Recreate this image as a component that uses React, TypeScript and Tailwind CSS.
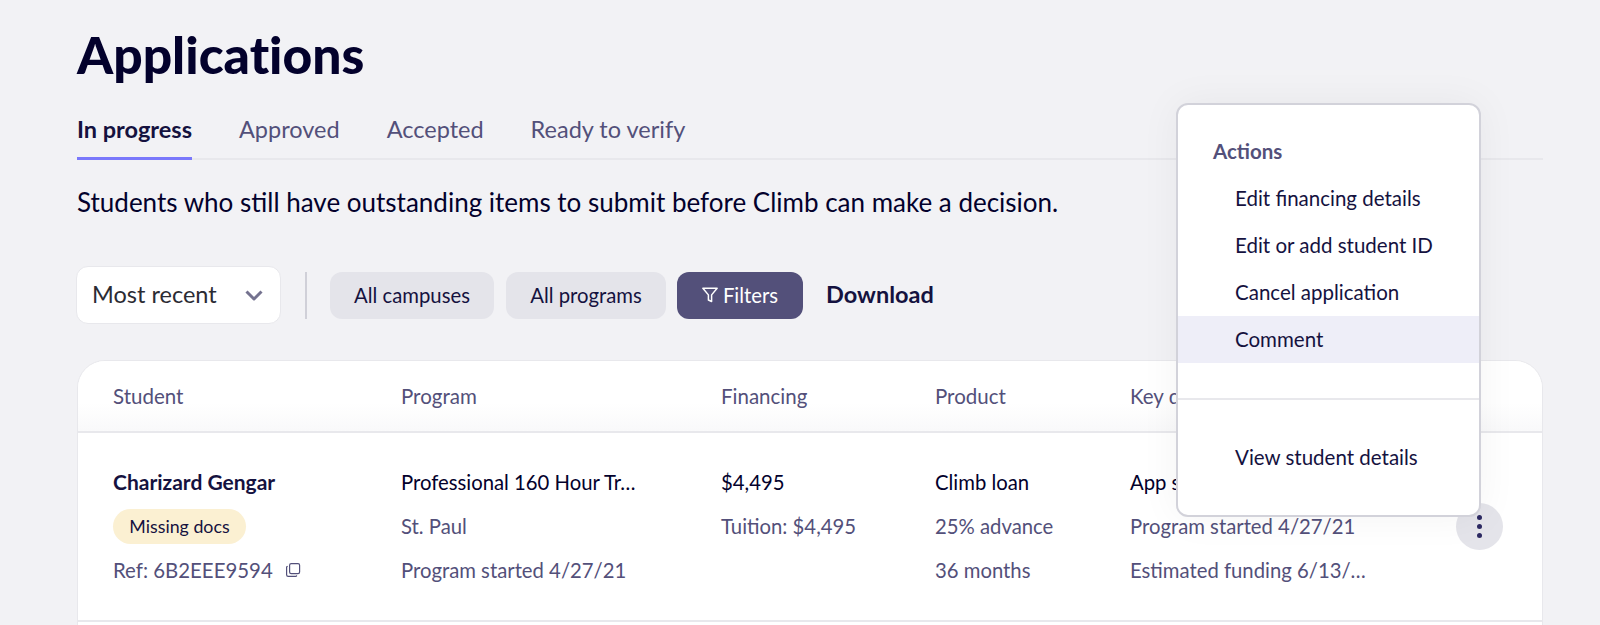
const tabs = ["Approved", "Accepted", "Ready to verify"];
const menuItems = ["Edit financing details", "Edit or add student ID", "Cancel application"];

function FilterIcon() {
  return (
    <svg width="16" height="16" viewBox="0 0 15 15" fill="none" stroke="currentColor" strokeWidth="1.4" strokeLinejoin="round">
      <path d="M.8 1.2h13.4L9 7.4v6.2l-3-1.4V7.4z" />
    </svg>
  );
}

function CopyIcon() {
  return (
    <svg width="16" height="16" viewBox="0 0 16 16" fill="none" stroke="#53507a" strokeWidth="1.2" strokeLinejoin="round">
      <rect x="4.6" y="1.6" width="10" height="10" rx="1.6" />
      <path d="M2.6 4.2 1.6 5v7.8c0 .9.7 1.6 1.6 1.6H11l.9-.9" />
    </svg>
  );
}

export default function App() {
  return (
    <div className="relative h-[625px] overflow-hidden bg-[#f2f2f5] pr-[57px] pl-[77px] font-['Lato','Noto_Sans',sans-serif] text-[#15123f]">
      <h1 className="pt-[23px] text-[51.6px] leading-[62px] font-black text-[#03012c] [font-variant-ligatures:none]">Applications</h1>

      {/* tabs */}
      <div className="mt-[21px] flex h-[54px] gap-[47px] border-b-2 border-[#e8e8ec] text-[23.5px] leading-[46px] text-[#53507a]">
        <span className="h-[54px] border-b-[3px] border-[#7a78fb] font-bold text-[#15123f]">In progress</span>
        {tabs.map((t) => (
          <span key={t}>{t}</span>
        ))}
      </div>

      <p className="mt-[26px] text-[26px] leading-[32px] text-[#03012c]">
        Students who still have outstanding items to submit before Climb can make a decision.
      </p>

      {/* filter bar */}
      <div className="mt-[49px] flex h-[56px] items-center">
        <div className="-ml-px flex h-[58px] w-[205px] shrink-0 items-center justify-between rounded-[12px] border border-[#e8e8ec] bg-white pr-[17px] pl-[15px] text-[23.5px] text-[#2b2b33]">
          Most recent
          <svg width="18" height="11" viewBox="0 0 18 11" fill="none" stroke="#74728f" strokeWidth="3" strokeLinejoin="round">
            <path d="M1.5 1.5 9 9l7.5-7.5" />
          </svg>
        </div>
        <div className="mr-[23px] ml-[24px] h-[47px] w-[2px] bg-[#d0d0d8]" />
        <div className="flex h-[47px] w-[164px] items-center justify-center rounded-[12px] bg-[#e4e4ea] text-[20.3px]">All campuses</div>
        <div className="ml-[12px] flex h-[47px] w-[160px] items-center justify-center rounded-[12px] bg-[#e4e4ea] text-[20.3px]">All programs</div>
        <div className="ml-[11px] flex h-[47px] w-[126px] items-center justify-center gap-[5px] rounded-[12px] bg-[#53507a] text-[20.3px] text-white">
          <FilterIcon />
          Filters
        </div>
        <span className="ml-[23px] text-[23.5px] font-bold">Download</span>
      </div>

      {/* table */}
      <div className="mt-[37px] h-[300px] rounded-t-[28px] border border-[#e8e8ec] bg-white">
        <div className="grid h-[72px] grid-cols-[288px_320px_214px_195px_1fr] items-center rounded-t-[28px] border-b-2 border-[#e8e8ec] bg-gradient-to-b from-white from-60% to-[#f9f9fa] pl-[35px] text-[20.5px] text-[#53507a]">
          <span>Student</span>
          <span>Program</span>
          <span>Financing</span>
          <span>Product</span>
          <span>Key dates</span>
        </div>
        <div className="relative grid h-[189px] grid-cols-[288px_320px_214px_195px_1fr] border-b-2 border-[#e8e8ec] pt-[27px] pl-[35px] text-[20.3px] leading-[44px] text-[#53507a]">
          <div>
            <div className="text-[21px] font-bold text-[#15123f]">Charizard Gengar</div>
            <div className="flex h-[44px] items-center">
              <span className="flex h-[35px] w-[133px] items-center justify-center rounded-full bg-[#fbf0d2] text-[17.8px] text-[#15123f]">Missing docs</span>
            </div>
            <div className="flex items-center gap-[12px] text-[20.4px]">
              Ref: 6B2EEE9594
              <CopyIcon />
            </div>
          </div>
          <div>
            <div className="text-[#03012c]">Professional 160 Hour Tr…</div>
            <div>St. Paul</div>
            <div>Program started 4/27/21</div>
          </div>
          <div>
            <div className="text-[#03012c]">$4,495</div>
            <div>Tuition: $4,495</div>
          </div>
          <div>
            <div className="text-[#03012c]">Climb loan</div>
            <div>25% advance</div>
            <div>36 months</div>
          </div>
          <div>
            <div className="text-[#03012c]">App submitted 4/27/21</div>
            <div>Program started 4/27/21</div>
            <div>Estimated funding 6/13/…</div>
          </div>
          {/* row menu button */}
          <div className="absolute top-[70px] right-[39px] flex h-[47px] w-[47px] flex-col items-center justify-center gap-[4px] rounded-full bg-[#e4e4ea]">
            <span className="h-[5px] w-[5px] rounded-full bg-[#2c2962]" />
            <span className="h-[5px] w-[5px] rounded-full bg-[#2c2962]" />
            <span className="h-[5px] w-[5px] rounded-full bg-[#2c2962]" />
          </div>
        </div>
      </div>

      {/* dropdown */}
      <div className="absolute top-[103px] left-[1176px] h-[414px] w-[305px] rounded-[12px] border-2 border-[#d2d2da] bg-white text-[20.5px] leading-[47px] text-[#15123f] shadow-[0_0_40px_rgba(0,0,0,0.05)]">
        <div className="pt-[23px] pl-[35px] font-bold text-[#53507a]">Actions</div>
        {menuItems.map((m) => (
          <div key={m} className="pl-[57px]">{m}</div>
        ))}
        <div className="bg-[#eeeef8] pl-[57px]">Comment</div>
        <div className="mt-[35px] border-t-2 border-[#e8e8ec] pt-[34px] pl-[57px]">View student details</div>
      </div>
    </div>
  );
}
